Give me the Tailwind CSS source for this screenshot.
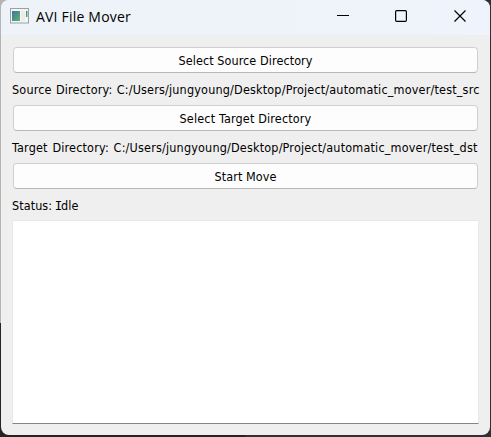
<!DOCTYPE html>
<html lang="en">
<head>
<meta charset="utf-8">
<title>AVI File Mover</title>
<script src="https://cdn.jsdelivr.net/npm/@tailwindcss/browser@4"></script>
</head>
<body class="w-[491px] h-[437px] overflow-hidden bg-linear-to-b from-[#b4b4b4] from-74% to-[#242420] to-74%">
<div class="w-full h-full pl-px pr-px pb-[2px] bg-linear-to-r from-transparent from-50% to-[#303030] to-50%">
<main class="w-full h-full flex flex-col overflow-hidden rounded-[8px] bg-[#efefef] text-black">
  <header class="h-[35px] shrink-0 flex items-center bg-linear-to-r from-[#edf3f8] to-[#eff3fb]">
    <svg class="ml-[9px] -mt-[4px] shrink-0" width="19" height="16" viewBox="0 0 19 16">
      <defs><linearGradient id="pane" x1="0" y1="0" x2="1" y2="1"><stop stop-color="#41749a"/><stop offset="1" stop-color="#5bb56b"/></linearGradient></defs>
      <rect x=".5" y=".5" width="18" height="14.5" fill="#f5f5f5" stroke="#9aa0a8"/>
      <rect x="2" y="3" width="8" height="10" fill="url(#pane)"/>
      <path d="M11 3h4v10h-4z" fill="#ececea"/>
      <path d="M16 3h1.5v6H16z" fill="url(#pane)"/>
    </svg>
    <h1 class="ml-[7px] w-[120px] -mt-[2px] font-['Open_Sans',sans-serif] text-[14px] tracking-[0.2px] leading-5 whitespace-nowrap">AVI File Mover</h1>
    <svg class="ml-auto mr-[23px] -mt-[5px]" width="130" height="14" viewBox="0 0 130 14" fill="none" stroke="#000" stroke-width="1.2">
      <path d="M0 7.5h12"/>
      <rect x="58.6" y="2.6" width="10.8" height="10.8" rx="1.2"/>
      <path d="M117.5 2.5l11 11M128.5 2.5l-11 11"/>
    </svg>
  </header>
  <section class="flex-1 flex flex-col pt-[12px] pl-[12px] pr-[11px] pb-[11px] font-['DejaVu_Sans_Condensed','DejaVu_Sans',sans-serif] text-[12.5px] tracking-[0.18px] leading-[15px]">
    <button class="h-[26px] mr-px shrink-0 rounded-[4px] border border-[#d0d0d0] border-b-[#b8b8b8] bg-[#fdfdfd] pt-px tracking-[0.08px]">Select Source Directory</button>
    <p class="h-[32px] shrink-0 -ml-px pt-[9px] whitespace-nowrap [word-spacing:0.5px]">Source Directory: C:/Users/jungyoung/Desktop/Project/automatic_mover/test_src</p>
    <button class="h-[26px] mr-px shrink-0 rounded-[4px] border border-[#d0d0d0] border-b-[#b8b8b8] bg-[#fdfdfd] pt-px tracking-[0.16px]">Select Target Directory</button>
    <p class="h-[32px] shrink-0 -ml-px pt-[9px] whitespace-nowrap [word-spacing:1px]">Target Directory: C:/Users/jungyoung/Desktop/Project/automatic_mover/test_dst</p>
    <button class="h-[26px] mr-px shrink-0 rounded-[4px] border border-[#d0d0d0] border-b-[#b8b8b8] bg-[#fdfdfd] pt-px tracking-[0.08px]">Start Move</button>
    <p class="h-[31px] shrink-0 -ml-px pt-[9px] whitespace-nowrap tracking-[0.08px]">Status: <span class="font-['DejaVu_Sans_Mono',monospace] -ml-px -mr-[1.5px]">I</span>dle</p>
    <div class="flex-1 -ml-px border border-[#e8e8e8] border-b-[#858585] bg-white"></div>
  </section>
</main>
</div>
</body>
</html>
